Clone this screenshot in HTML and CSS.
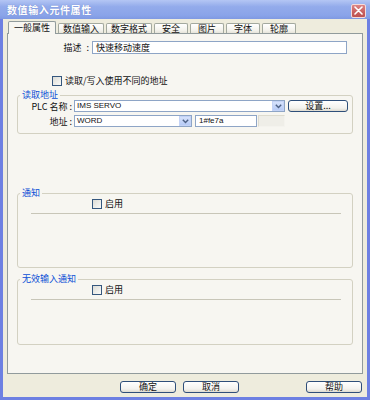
FILE: index.html
```html
<!DOCTYPE html>
<html lang="zh-CN">
<head>
    <meta charset="UTF-8">
    <title>数值输入元件属性</title>
    <link rel="stylesheet" href="styles.css">
</head>
<body>
    <div class="window">
        <div class="titlebar">
            <span class="title">数值输入元件属性</span>
            <span class="close">
                <svg width="9" height="9" viewBox="0 0 9 9"><path d="M1 1 L8 8 M8 1 L1 8" stroke="#fff" stroke-width="1.6" stroke-linecap="round"/></svg>
            </span>
        </div>
        <div class="client">
            <ul class="tabs">
                <li class="tab current">一般属性</li>
                <li class="tab">数值输入</li>
                <li class="tab">数字格式</li>
                <li class="tab">安全</li>
                <li class="tab">图片</li>
                <li class="tab">字体</li>
                <li class="tab">轮廓</li>
            </ul>
            <div class="panel">
                <div class="row desc-row">
                    <span class="desc-label">描述 :</span>
                    <div class="textbox desc-input">快速移动速度</div>
                </div>
                <div class="check-row diff-addr"><span class="checkbox"></span>读取/写入使用不同的地址</div>

                <fieldset class="group read-group">
                    <legend>读取地址</legend>
                    <div class="row">
                        <span class="field-label">PLC 名称 :</span>
                        <div class="combo plc-combo">
                            <span class="combo-text">IMS SERVO</span>
                            <span class="combo-btn"><svg width="7" height="5" viewBox="0 0 7 5"><path d="M0.8 0.8 L3.5 3.6 L6.2 0.8" fill="none" stroke="#4d6185" stroke-width="1.4"/></svg></span>
                        </div>
                        <div class="btn setting-btn">设置...</div>
                    </div>
                    <div class="row addr-row">
                        <span class="field-label">地址 :</span>
                        <div class="combo addr-combo">
                            <span class="combo-text">WORD</span>
                            <span class="combo-btn"><svg width="7" height="5" viewBox="0 0 7 5"><path d="M0.8 0.8 L3.5 3.6 L6.2 0.8" fill="none" stroke="#4d6185" stroke-width="1.4"/></svg></span>
                        </div>
                        <div class="textbox addr-input">1#fe7a</div>
                        <div class="disabled-box"></div>
                    </div>
                </fieldset>

                <fieldset class="group notice-group">
                    <legend>通知</legend>
                    <div class="check-row"><span class="checkbox"></span>启用</div>
                    <div class="separator"></div>
                </fieldset>

                <fieldset class="group invalid-group">
                    <legend>无效输入通知</legend>
                    <div class="check-row"><span class="checkbox"></span>启用</div>
                    <div class="separator"></div>
                </fieldset>
            </div>
            <div class="buttons">
                <div class="btn">确定</div>
                <div class="btn">取消</div>
                <div class="btn help-btn">帮助</div>
            </div>
        </div>
    </div>
</body>
</html>
```

FILE: styles.css
```css
* {
    padding: 0;
    margin: 0;
    box-sizing: border-box;
    list-style: none;
}
body {
    width: 370px;
    height: 400px;
    overflow: hidden;
    font-family: "Noto Sans CJK SC", "Liberation Sans", sans-serif;
    font-size: 9px;
    color: #111;
    background: #eeecdd;
}
.window {
    width: 370px;
    height: 400px;
    display: flex;
    flex-direction: column;
    background: #eeecdd;
}
.titlebar {
    height: 19px;
    display: flex;
    align-items: center;
    padding: 0 4px 0 7px;
    background: linear-gradient(#b4c6f4, #93abeb 35%, #8aa4e9 80%, #7f99e2);
    color: #fff;
}
.title {
    flex: 1;
    font-size: 10px;
    font-weight: bold;
    letter-spacing: 0.6px;
    line-height: 12px;
    text-shadow: 0 0 1px rgba(60, 80, 160, 0.5);
}
.close {
    width: 15px;
    height: 14px;
    margin-top: 2px;
    display: flex;
    align-items: center;
    justify-content: center;
    border: 1px solid #f4dada;
    border-radius: 2px;
    background: linear-gradient(#dc8585, #c85e5e 60%, #bd5252);
}
.client {
    flex: 1;
    padding: 2px 4px 0;
    border: 3px solid #6d80e2;
    border-top: 0;
}

/* tabs */
.tabs {
    display: flex;
    align-items: flex-end;
    height: 12px;
    padding-left: 1px;
}
.tab {
    min-width: 34px;
    height: 10px;
    margin-right: 2px;
    padding: 0 4px;
    text-align: center;
    line-height: 9px;
    border: 1px solid #a3a99f;
    border-bottom: 0;
    border-radius: 2px 2px 0 0;
    background: linear-gradient(#fff, #f3f2ec 70%, #e6e4da);
}
.tab.current {
    position: relative;
    z-index: 1;
    height: 13px;
    margin-bottom: -1px;
    padding: 0 5px;
    line-height: 12px;
    border-color: #919b9c;
    background: #f7f6f1;
}
.panel {
    height: 341px;
    border: 1px solid #919b9c;
    background: #f7f6f1;
}

/* rows */
.row {
    display: flex;
    align-items: center;
    height: 12px;
}
.desc-row {
    margin-top: 7px;
    height: 13px;
}
.desc-label {
    width: 84px;
    padding-right: 3px;
    text-align: right;
    word-spacing: 3px;
}
.textbox {
    height: 100%;
    padding-left: 3px;
    border: 1px solid #8ea5c6;
    background: #fff;
    line-height: 10px;
    white-space: nowrap;
}
.desc-input {
    width: 255px;
    line-height: 11px;
}
.check-row {
    display: flex;
    align-items: center;
    height: 10px;
    line-height: 10px;
}
.checkbox {
    width: 10px;
    height: 10px;
    margin-right: 3px;
    border: 1px solid #35577e;
    background: linear-gradient(135deg, #dcdcd6, #fafaf8);
}
.diff-addr {
    margin-top: 22px;
    padding-left: 44px;
}

/* group boxes */
.group {
    margin: 0 9px;
    padding: 0;
    border: 1px solid #d3d1c2;
    border-radius: 3px;
    min-inline-size: 0;
}
.group legend {
    margin-left: 2px;
    padding: 0 2px;
    line-height: 10px;
    color: #0b4fd6;
}
.read-group {
    margin-top: 4px;
    padding-bottom: 6px;
}
.notice-group {
    margin-top: 54px;
    padding-bottom: 53px;
}
.invalid-group {
    margin-top: 6px;
    padding-bottom: 44px;
}
.group .check-row {
    margin-top: 1px;
    padding-left: 74px;
}
.separator {
    height: 1px;
    margin: 4px 11px 0 13px;
    background: #c8c6b8;
}
.field-label {
    width: 56px;
    padding-right: 2px;
    text-align: right;
    white-space: nowrap;
}
.addr-row {
    margin-top: 3px;
}
.combo {
    display: flex;
    height: 100%;
    border: 1px solid #8ea5c6;
    background: #fff;
}
.combo-text {
    flex: 1;
    padding-left: 2px;
    font-family: "Liberation Sans", sans-serif;
    font-size: 8px;
    line-height: 10px;
}
.addr-input {
    font-family: "Liberation Sans", sans-serif;
    font-size: 8px;
}
.combo-btn {
    width: 12px;
    display: flex;
    align-items: center;
    justify-content: center;
    border: 1px solid #c4d3f6;
    background: linear-gradient(#d6e2fc, #b7cbf6);
}
.plc-combo {
    width: 211px;
}
.addr-combo {
    width: 118px;
}
.addr-input {
    width: 62px;
    margin-left: 3px;
}
.disabled-box {
    width: 27px;
    height: 100%;
    margin-left: 1px;
    border: 1px solid #dddbcf;
    border-right-color: #f4f3ee;
    border-bottom-color: #f4f3ee;
    background: #efeee8;
}

/* buttons */
.btn {
    width: 56px;
    height: 12px;
    text-align: center;
    line-height: 10px;
    border: 1px solid #2f4f7a;
    border-radius: 3px;
    background: linear-gradient(#fff, #f3f2ee 70%, #dedbd0);
}
.setting-btn {
    width: 60px;
    margin-left: 3px;
}
.buttons {
    display: flex;
    gap: 7px;
    margin-top: 7px;
    padding-left: 113px;
    padding-right: 1px;
}
.help-btn {
    margin-left: auto;
}
```
